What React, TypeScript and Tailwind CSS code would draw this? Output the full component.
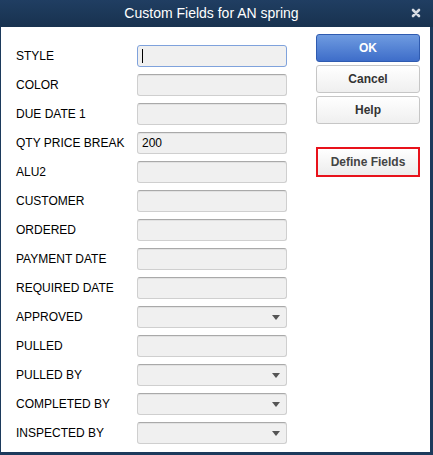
import React from "react";

type Field = { label: string; value?: string; select?: boolean; focus?: boolean };

const fields: Field[] = [
  { label: "STYLE", focus: true },
  { label: "COLOR" },
  { label: "DUE DATE 1" },
  { label: "QTY PRICE BREAK", value: "200" },
  { label: "ALU2" },
  { label: "CUSTOMER" },
  { label: "ORDERED" },
  { label: "PAYMENT DATE" },
  { label: "REQUIRED DATE" },
  { label: "APPROVED", select: true },
  { label: "PULLED" },
  { label: "PULLED BY", select: true },
  { label: "COMPLETED BY", select: true },
  { label: "INSPECTED BY", select: true },
];

function FieldBox({ f }: { f: Field }) {
  return (
    <div
      className={`relative flex h-[22px] w-[150px] items-center rounded-[3px] border bg-[#f0f0f0] px-[4px] text-[12px] text-black ${
        f.focus
          ? "border-[#7fa2dc]"
          : "border-[#cfcfcf] border-t-[#a9a9a9] shadow-[inset_0_1px_0_#e2e2e2]"
      }`}
    >
      {f.focus && <span className="h-[14px] w-px bg-black" />}
      {f.value && <span>{f.value}</span>}
      {f.select && (
        <span className="absolute right-[6px] top-[8px] h-0 w-0 border-x-[4px] border-t-[5px] border-x-transparent border-t-[#555]" />
      )}
    </div>
  );
}

export default function App() {
  return (
    <div
      className="flex h-[455px] w-[433px] flex-col bg-[#1c3a5c]"
      style={{ fontFamily: '"Liberation Sans", Arial, sans-serif' }}
    >
      {/* Title bar */}
      <div className="relative flex h-[27px] items-center justify-center bg-gradient-to-b from-[#203e62] to-[#18324f] pr-[10px] text-[14px] text-white">
        Custom Fields for AN spring
        <svg
          className="absolute right-[12px] top-[8px]"
          width="10"
          height="10"
          viewBox="0 0 10 10"
        >
          <path d="M2 2 L8 8 M8 2 L2 8" stroke="#d6dbe2" strokeWidth="2.6" strokeLinecap="round" />
        </svg>
      </div>

      {/* Body */}
      <div className="mb-[3px] ml-[1px] mr-[3px] flex flex-1 bg-white">
        <div className="flex flex-col pl-[15px] pt-[14px]">
          {fields.map((f) => (
            <div key={f.label} className="flex h-[29px] items-center">
              <div className="w-[121px] text-[12px] text-black">{f.label}</div>
              <FieldBox f={f} />
            </div>
          ))}
        </div>

        <div className="ml-[29px] flex w-[104px] flex-col pt-[7px]">
          <button className="h-[28px] rounded-[3px] border border-[#2f5bb0] bg-gradient-to-b from-[#6f9be0] to-[#3e6dc9] text-[12px] font-bold text-white">
            OK
          </button>
          <button className="mt-[3px] h-[28px] rounded-[3px] border border-[#c6c6c6] bg-gradient-to-b from-white to-[#efefef] text-[12px] font-bold text-[#333]">
            Cancel
          </button>
          <button className="mt-[3px] h-[28px] rounded-[3px] border border-[#c6c6c6] bg-gradient-to-b from-white to-[#efefef] text-[12px] font-bold text-[#333]">
            Help
          </button>
          <div className="mt-[23px] h-[30px] border-2 border-[#e8121b] bg-gradient-to-b from-white to-[#ececec] p-0">
            <button className="h-full w-full text-[12px] font-bold text-[#444]">
              Define Fields
            </button>
          </div>
        </div>
      </div>
    </div>
  );
}
